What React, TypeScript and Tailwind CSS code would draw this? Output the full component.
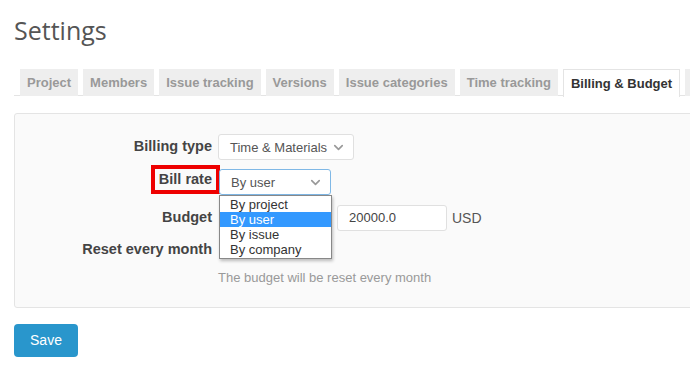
import React from 'react';
import { ChevronDown } from 'lucide-react';

const TABS = ['Project', 'Members', 'Issue tracking', 'Versions', 'Issue categories', 'Time tracking', 'Billing & Budget', 'Files'];
const ACTIVE = 'Billing & Budget';
const RATE_OPTIONS = ['By project', 'By user', 'By issue', 'By company'];

const FakeSelect: React.FC<{ value: string; width: string; focused?: boolean }> = ({ value, width, focused }) => (
  <div
    className={`flex items-center justify-between h-[26px] bg-white rounded-[3px] border pl-[11px] pr-[7px] text-[13px] text-[#555] ${width} ${
      focused ? 'border-[#7fb8e6]' : 'border-[#e0e0e0]'
    }`}
  >
    <span className="pt-[1px]">{value}</span>
    <ChevronDown size={15} strokeWidth={2.6} className="text-[#999]" />
  </div>
);

const App: React.FC = () => {
  return (
    <div className="w-[690px] h-[385px] overflow-hidden bg-white font-['Liberation_Sans',Arial,sans-serif]">
      <div className="w-[740px] pl-[14px]">
        <h1 className="pt-[12px] h-[57px] text-[25px] leading-[36px] text-[#555] font-['Open_Sans',sans-serif]">Settings</h1>

        {/* --- Tabs --- */}
        <div className="flex gap-[5px] pl-[6px] h-[39px] pt-[12px] border-b border-[#e4e4e4]">
          {TABS.map(tab => (
            <div
              key={tab}
              className={`h-[27px] flex items-center text-[13px] font-bold whitespace-nowrap ${
                tab === ACTIVE
                  ? 'px-[7px] bg-white text-[#333] border border-b-0 border-[#e4e4e4] -mb-px h-[28px]'
                  : 'px-[7px] bg-[#eee] text-[#999]'
              }`}
            >
              {tab}
            </div>
          ))}
        </div>

        {/* --- Form box --- */}
        <div className="mt-[17px] h-[195px] bg-[#fafafa] border border-[#e4e4e4] rounded-[3px] pt-[20px] text-[14.5px]">
          <div className="flex items-center h-[26px]">
            <div className="w-[197px] text-right font-bold text-[#444]">Billing type</div>
            <div className="ml-[6px]">
              <FakeSelect value="Time & Materials" width="w-[136px]" />
            </div>
          </div>

          <div className="flex items-center h-[26px] mt-[9px]">
            <div className="w-[197px] flex justify-end">
              <span className="relative -top-[3px] font-bold text-[#444] border-[4px] border-[#ee0000] px-[4px] -mr-[8px] h-[29px] leading-[21px]">Bill rate</span>
            </div>
            <div className="ml-[7px] relative z-10">
              <FakeSelect value="By user" width="w-[112px]" focused />
              <div className="absolute left-0 top-[26px] w-[113px] bg-white border border-[#888] shadow-[1px_2px_3px_rgba(0,0,0,0.25)] py-[1px] text-[13px] text-[#333]">
                {RATE_OPTIONS.map(opt => (
                  <div
                    key={opt}
                    className={`h-[15px] leading-[15px] pl-[10px] ${opt === 'By user' ? 'bg-[#3399ff] text-white' : ''}`}
                  >
                    {opt}
                  </div>
                ))}
              </div>
            </div>
          </div>

          <div className="flex items-center h-[26px] mt-[10px]">
            <div className="w-[197px] text-right font-bold text-[#444]">Budget</div>
            <div className="ml-[7px] flex items-center">
              <FakeSelect value="Total" width="w-[110px]" />
              <div className="ml-[8px] w-[110px] h-[26px] bg-white border border-[#e0e0e0] rounded-[3px] pl-[11px] flex items-center text-[13px] text-[#444]">
                20000.0
              </div>
              <span className="ml-[5px] text-[14px] text-[#555]">USD</span>
            </div>
          </div>

          <div className="flex items-center h-[20px] mt-[9px]">
            <div className="w-[197px] text-right font-bold text-[#444]">Reset every month</div>
            <input type="checkbox" className="ml-[10px]" />
          </div>

          <div className="pl-[203px] mt-[8px] text-[13px] text-[#999] leading-[20px]">The budget will be reset every month</div>
        </div>

        <button className="mt-[16px] w-[64px] h-[33px] rounded-[4px] bg-[#2996cc] text-white text-[14px]">Save</button>
      </div>
    </div>
  );
};

export default App;
